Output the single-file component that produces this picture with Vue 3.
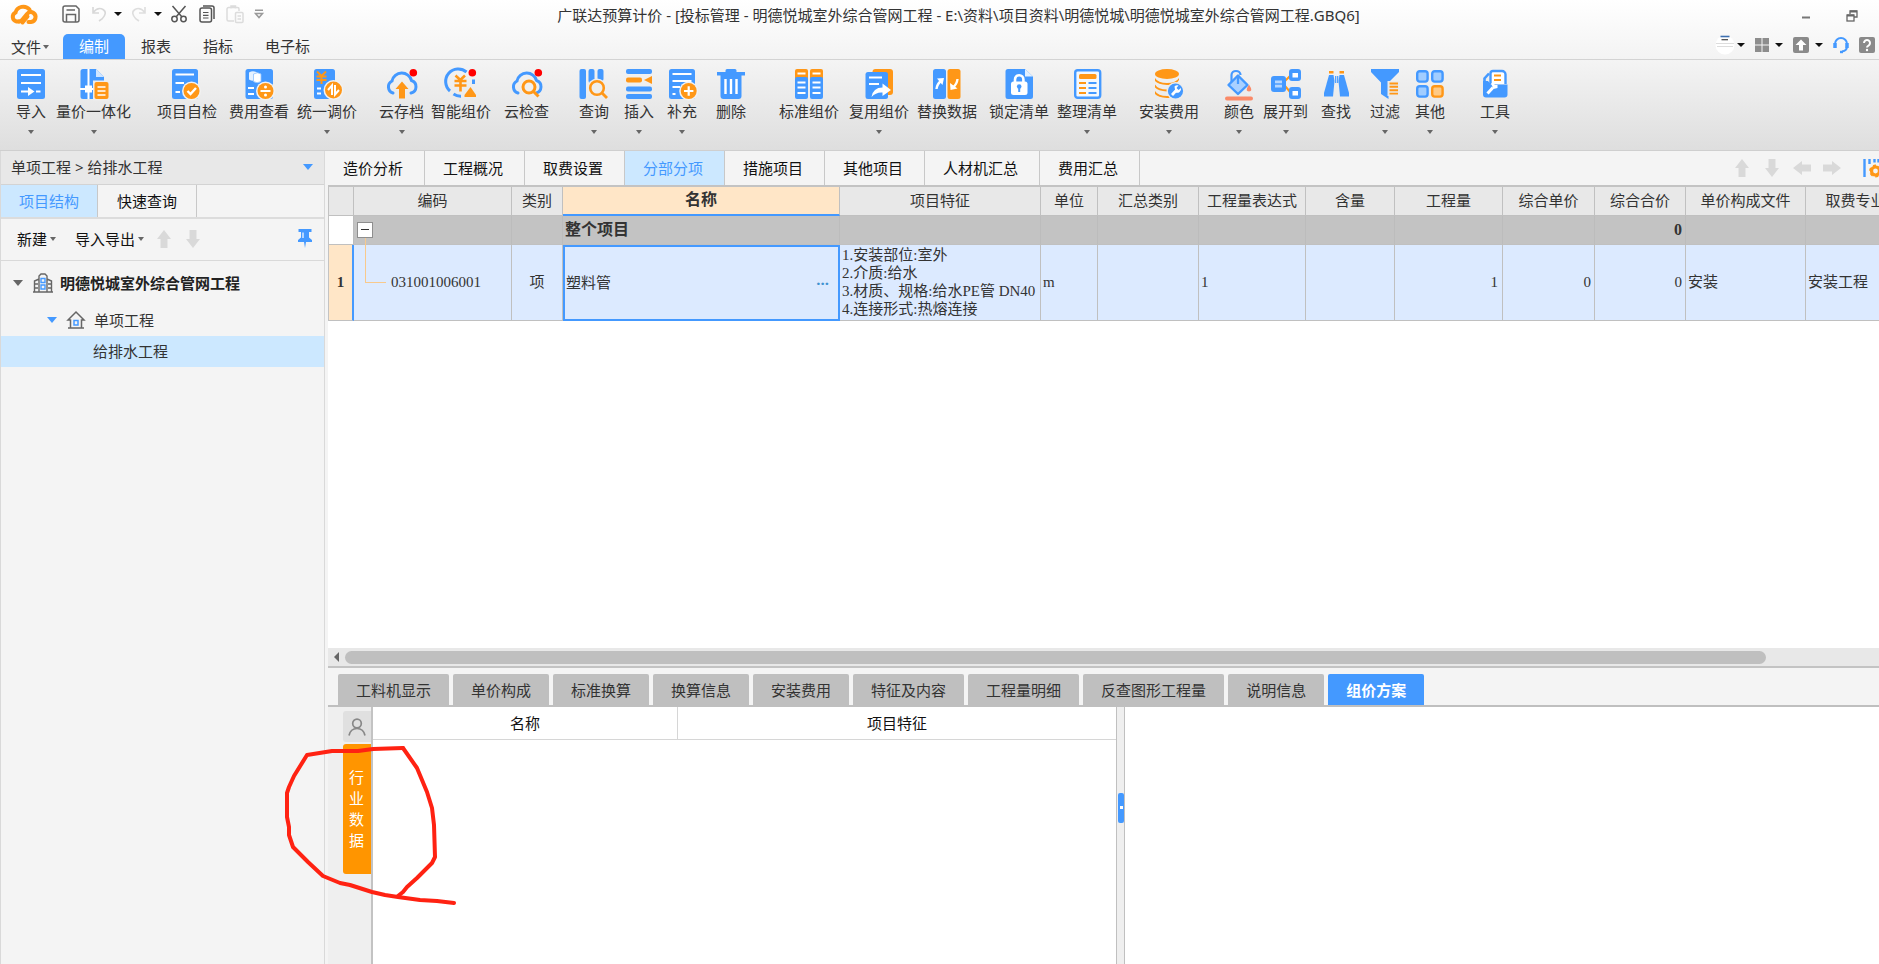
<script setup>
import { ref } from 'vue'

const B = '#4499ff'
const O = '#ff9717'
const line = (d, w = 2, c = '#fff') => `<path d="${d}" fill="none" stroke="${c}" stroke-width="${w}"/>`
const disc = (x, y, r = 8) => `<circle cx="${x}" cy="${y}" r="${r + 1.5}" fill="#f2f2f2"/><circle cx="${x}" cy="${y}" r="${r}" fill="${O}"/>`
const dot = '<circle cx="26.3" cy="3.7" r="3.8" fill="#f00"/>'
const cloud = `<path d="M6 24A6.5 6.5 0 0 1 5 12A10 9.8 0 0 1 24.5 11.5A6.5 6.5 0 0 1 24 24" fill="none" stroke="${B}" stroke-width="3" stroke-linecap="round"/>`
const sheet = (x, w, h = 30, y = 0) => `<rect x="${x}" y="${y}" width="${w}" height="${h}" rx="2.5" fill="${B}"/>`

const icons = {
  import: sheet(1, 28) + line('M5 6H25M5 14H25M5 22.5H13M20 22.5H24.5') + '<path d="M12 18l6.5 4.5L12 27z" fill="#fff"/>',
  unify: `<path d="M4 0H17L25 8V30H4a2.5 2.5 0 0 1-2.500-2.500V2.500A2.500 2.500 0 0 1 4 0z" fill="${B}"/><path d="M17 0l8 8h-8z" fill="#cfe5ff"/>` +
    line('M9.500 0V30M1 20H16') + '<rect x="6" y="16.500" width="7" height="7" fill="#fff"/><rect x="14" y="11.500" width="16.500" height="20" fill="#ededed"/>' +
    `<rect x="15.500" y="13" width="14" height="17" rx="2" fill="${O}"/>` + line('M18.500 18H26.500M18.500 22H26.500M18.500 26H26.500', 1.6),
  check: sheet(0, 26) + line('M3.500 5.500H22M3.500 14H12M3.500 23H8') + disc(19.5, 22) + line('M15.500 22l3 3l5.500-6', 2.4),
  fee: sheet(1.5, 27.5) + '<path d="M5 3.500q4-2.500 8 0v7q-4 2.500-8 0z" fill="#e6f2ff"/><path d="M9.500 5q4-2.500 7.500 0v7.500q-4 2.500-7.500 0z" fill="#fff" stroke="#8fc2ff" stroke-width=".8"/>' +
    line('M4 19H10M4 25H10') + disc(21.5, 22) + line('M16.500 22H26.500') + '<circle cx="21.500" cy="18" r="1.500" fill="#fff"/><circle cx="21.500" cy="26" r="1.500" fill="#fff"/>',
  adjust: sheet(2, 21) + line('M5 2.500L9.500 7L14 2.500M4.500 7.500H14.500M4.500 11H14.500M9.500 6.500V15', 2, O) + line('M5 19.500H9M5 24.500H9') + disc(21.5, 21, 8.5) +
    line('M20 26V16.500L16 21M23 16V25.500L27 21', 2),
  cloudUp: cloud + `<path d="M15 12.500l6.500 7.500H18v9.500h-6V20H8.500z" fill="${O}"/>` + dot,
  smart: `<path d="M20.500 3A12.500 12.500 0 0 0 4 22M27.500 10.500V15M7.500 25A12.500 12.500 0 0 0 15 27.200" fill="none" stroke="${B}" stroke-width="3"/>` +
    line('M9.500 6.500L14.300 11L19 6.500M8.500 12H20.500M8.500 16.500H20.500M14.500 11V22.500', 2.6, O) + `<path d="M24.500 18l5.500 8v2H18.500v-2z" fill="${O}"/>` + dot,
  cloudFind: cloud + '<circle cx="17" cy="18" r="8.500" fill="#f0f0f0"/>' + `<circle cx="17" cy="18" r="6" fill="#f0f0f0" stroke="${O}" stroke-width="3"/>` + line('M21.500 22.500L26.500 27.500', 3, O) + dot,
  query: `<rect x=".5" width="6.500" height="30" rx="2" fill="${B}"/><rect x="9.500" width="6" height="14" rx="2" fill="${B}"/><rect x="18.500" width="6" height="12" rx="2" fill="${B}"/>` +
    `<circle cx="18" cy="19" r="9.500" fill="#eee"/><circle cx="18" cy="19" r="6.800" fill="#eee" stroke="${O}" stroke-width="2.600"/>` + line('M23 24L28 29', 2.8, O),
  insert: `<rect x="2" width="26" height="5" rx="2" fill="${B}"/><rect x="2" y="8.500" width="16" height="5" rx="2" fill="${O}"/><path d="M28 7v8l-8-4z" fill="${O}"/><rect x="2" y="17.500" width="26" height="5" rx="2" fill="${B}"/><rect x="2" y="25" width="26" height="5" rx="2" fill="${B}"/>`,
  add: sheet(2, 26) + line('M5.500 5H24.500') + line('M5.500 12H24.500M5.500 18H13M5.500 25H8.500') + disc(21.7, 22) + line('M17 22H26.400M21.700 17.300V26.700', 2.2),
  trash: `<path d="M1 3H9.500V1.500Q9.500 0 11 0H19Q20.500 0 20.500 1.500V3H29V6.500H1z" fill="${B}"/><path d="M4.500 6H25.500V27a3 3 0 0 1-3 3H7.500a3 3 0 0 1-3-3z" fill="${B}"/>` + line('M9.500 10V25M15 10V25M20.500 10V25', 2.4),
  standard: [1, 16].map(x => `<rect x="${x}" width="13" height="11" rx="2" fill="${O}"/><rect x="${x}" y="8" width="13" height="22" rx="2" fill="${B}"/>` + line(`M${x + 2.5} 4.500h8M${x + 2.5} 13.500h8M${x + 2.5} 18.500h8M${x + 2.5} 24h8`, 1.8)).join(''),
  reuse: `<rect x="8.500" width="20.500" height="26" rx="3" fill="${O}"/>` + sheet(1.5, 22.5, 27, 3) + line('M5 8.500H18M5 15H15') +
    '<path d="M7.500 28Q9 18.500 18.500 18.500V14.500L27 21L18.500 27V23.500Q12 23 7.500 28z" fill="#fff"/>',
  replace: sheet(1, 13) + `<rect x="15.500" width="13" height="30" rx="2.500" fill="${O}"/>` + line('M4.500 20Q5 15 9.500 11.500', 2.4) + '<path d="M5 9.500L12 9L10.500 16z" fill="#fff"/>' +
    line('M25.500 10Q25 15 21 18.500', 2.4) + '<path d="M18 14l.5 7l7-1.500z" fill="#fff"/>',
  lock: `<path d="M4 0H21L29 7.500V27.500A2.500 2.500 0 0 1 26.500 30H4A2.500 2.500 0 0 1 1.500 27.500V2.500A2.500 2.500 0 0 1 4 0z" fill="${B}"/><path d="M21 0l8 7.500h-8z" fill="#e2f0ff"/>` +
    line('M11 14V10.500a4.200 4.200 0 0 1 8.400 0V14', 2.6) + `<rect x="7" y="12.500" width="16.500" height="13.500" rx="2.500" fill="#fff"/><circle cx="15.200" cy="17.500" r="2.300" fill="${B}"/>` + line('M15.200 18V23', 2, B),
  arrange: `<rect x="3.200" y="1.200" width="25" height="27.600" rx="2.500" fill="#f4f8fd" stroke="${B}" stroke-width="2.400"/><rect x="7" y="5" width="17.500" height="5" rx="1.500" fill="${O}"/>` +
    line('M7 14H14M7 19H14M7 24H14', 2.2, O) + line('M16.500 14H24.500M16.500 19H24.500M16.500 24H24.500', 2.2, B),
  install: `<ellipse cx="13" cy="5" rx="12" ry="5" fill="${O}"/>` + [0, 6.5, 13].map(y => `<path d="M1 ${y + 9}Q4 ${y + 14} 13 ${y + 14}T25 ${y + 9}V${y + 11}Q22 ${y + 16.500} 13 ${y + 16}T1 ${y + 12}z" fill="${O}"/>`).join('') +
    `<circle cx="21.500" cy="22" r="9" fill="#ececec"/><circle cx="21.500" cy="22" r="7.600" fill="${B}"/>` + line('M18 26L23 20.500', 2.8) + `<path d="M20.500 17.500a4 4 0 0 1 4-1l-2 2.500l2 2l2.500-2a4 4 0 0 1-5.500 4.500z" fill="#fff"/>`,
  color: `<path d="M14 6.500L23.500 16L14 25L4.500 16z" fill="#a9d0ff" stroke="${B}" stroke-width="2.400" stroke-linejoin="round"/><path d="M7.500 13V6a4.500 4 0 0 1 9 0M14 6V15" fill="none" stroke="${B}" stroke-width="2.200"/><path d="M25 15.500q4.500 7 0 7t0-7z" fill="#fa8a68"/><rect x="1" y="27.500" width="28" height="4" rx="2" fill="#fa8a68"/>`,
  expand: line('M14 12L20 6M14 17L20 24', 2, O) + `<rect x="0" y="7" width="15" height="16" rx="3" fill="${B}"/><rect x="4" y="11.500" width="7" height="7" fill="#b5d7ff"/>` + line('M4 15H11', 1.4, B) +
    `<rect x="18" width="12" height="12" rx="3" fill="${B}"/><rect x="21.500" y="4" width="5.500" height="4.500" fill="#fff"/><rect x="18" y="18" width="12" height="12" rx="3" fill="${B}"/><rect x="21.500" y="22" width="5.500" height="4.500" fill="#fff"/>`,
  find: `<path d="M8 6H12.500L13.500 12L12 27.500H3V24z" fill="${B}"/><path d="M18.500 6H23L28 24V27.500H19L17.500 12z" fill="${B}"/>` + line('M14.700 7V14M16.700 7V14', 1.2, B) + line('M8 3.300H12.500M18.500 3.300H23', 2.4, O),
  filter: `<path d="M1 0H29V3L18.500 13.500V30L11 25V13.500L1 3z" fill="${B}"/><rect x="17.500" y="12" width="12" height="15" fill="#eaeaea"/>` + line('M19.500 14.500H28M19.500 17.800H28M19.500 21.200H28M19.500 24.600H28', 1.9, O),
  other: [[1, 1, B, '#a1cdff'], [16, 1, B, '#a1cdff'], [1, 16, B, '#a1cdff'], [16, 16, O, '#ffca85']].map(([x, y, s, f]) => `<rect x="${x + 1.2}" y="${y + 1.2}" width="10.400" height="10.400" rx="2.500" fill="${f}" stroke="${s}" stroke-width="2.400"/>`).join(''),
  tool: `<path d="M4.500 14V9.500L9 4.500" fill="none" stroke="${B}" stroke-width="2.600"/><path d="M10.500 15V4.500a2.500 2.500 0 0 1 2.500-2.500H22a3.500 3.500 0 0 1 3.500 3.500V15" fill="#fff" stroke="${B}" stroke-width="2.400"/>` +
    line('M14 6.500H21M14 11H21', 2.2, O) + `<path d="M3 12H8L11 15.500H27.500V25.500a3 3 0 0 1-3 3H6a3 3 0 0 1-3-3z" fill="${B}"/>` + line('M7.500 24.500L13 18.500', 3) + '<path d="M11 14.500l3.500-1.500v3h3v3l-4 1z" fill="#fff"/>',
}

const ribbon = [
  ['import', '导入', 1], ['unify', '量价一体化', 1], ['check', '项目自检'], ['fee', '费用查看'], ['adjust', '统一调价', 1],
  ['cloudUp', '云存档', 1], ['smart', '智能组价'], ['cloudFind', '云检查'],
  ['query', '查询', 1], ['insert', '插入', 1], ['add', '补充', 1], ['trash', '删除'],
  ['standard', '标准组价'], ['reuse', '复用组价', 1], ['replace', '替换数据'], ['lock', '锁定清单'], ['arrange', '整理清单', 1],
  ['install', '安装费用', 1], ['color', '颜色', 1], ['expand', '展开到', 1], ['find', '查找'], ['filter', '过滤', 1], ['other', '其他', 1],
  ['tool', '工具', 1],
]

const mainTabs = ['造价分析', '工程概况', '取费设置', '分部分项', '措施项目', '其他项目', '人材机汇总', '费用汇总']
const mainTab = ref('分部分项')
const dockTabs = ['工料机显示', '单价构成', '标准换算', '换算信息', '安装费用', '特征及内容', '工程量明细', '反查图形工程量', '说明信息', '组价方案']
const dockTab = ref('组价方案')
const menus = ['编制', '报表', '指标', '电子标']
const menu = ref('编制')
const sideTabs = ['项目结构', '快速查询']
const sideTab = ref('项目结构')

const columns = [
  ['no', ''], ['code', '编码'], ['kind', '类别'], ['name', '名称'], ['feature', '项目特征'], ['unit', '单位'], ['sumkind', '汇总类别'],
  ['expr', '工程量表达式'], ['content', '含量'], ['qty', '工程量'], ['price', '综合单价'], ['total', '综合合价'], ['file', '单价构成文件'], ['major', '取费专业'],
]
const features = ['1.安装部位:室外', '2.介质:给水', '3.材质、规格:给水PE管 DN40', '4.连接形式:热熔连接']
</script>

<template>
  <div class="app">
    <header class="top">
      <div class="titlebar">
        <div class="quick">
          <svg class="logo" viewBox="0 0 28 21" width="28" height="21">
            <path d="M12.500 18.500L17.500 12.500M9 17.500H6.500A4.800 4.800 0 0 1 5.500 8.500A8 7.500 0 0 1 19.500 5.500" fill="none" stroke="#ff9717" stroke-width="4" stroke-linecap="round" />
            <path d="M9 17.500Q11 17.500 12.500 15.500L17 10Q20 6.500 23.500 9A5 5 0 0 1 21 18H18.500" fill="none" stroke="#ff9717" stroke-width="4" stroke-linecap="round" />
          </svg>
          <button class="q" aria-label="保存"><svg viewBox="0 0 18 18" width="18" height="18" fill="none" stroke="#666" stroke-width="1.500"><path d="M3 1H14L17 4V15a2 2 0 0 1-2 2H3a2 2 0 0 1-2-2V3A2 2 0 0 1 3 1zM4.500 5H13M4.500 17V9.500H13.500V17" /></svg></button>
          <button class="q" aria-label="撤销"><svg viewBox="0 0 18 18" width="18" height="18" fill="none" stroke="#d8d8d8" stroke-width="1.600"><path d="M3 2V8H9M3 7.500Q8 1.500 13 4.500T12 14L9 16" /></svg></button>
          <i class="tri black"></i>
          <button class="q" aria-label="恢复"><svg viewBox="0 0 18 18" width="18" height="18" fill="none" stroke="#dedede" stroke-width="1.600"><path d="M15 2V8H9M15 7.500Q10 1.500 5 4.500T6 14L9 16" /></svg></button>
          <i class="tri black"></i>
          <button class="q" aria-label="剪切"><svg viewBox="0 0 18 18" width="18" height="18" fill="none" stroke="#555" stroke-width="1.500"><path d="M2.500 1L12 12M15.500 1L6 12" /><circle cx="4.500" cy="14" r="2.700" /><circle cx="13.500" cy="14" r="2.700" /></svg></button>
          <button class="q" aria-label="复制"><svg viewBox="0 0 18 18" width="18" height="18" fill="none" stroke="#555" stroke-width="1.500"><path d="M5 1H14a2 2 0 0 1 2 2V14" /><rect x="2" y="3" width="11.500" height="14" rx="2" /><path d="M5 7.500H10.500M5 10.300H10.500M5 13H10.500" stroke-width="1.200" /></svg></button>
          <button class="q" aria-label="粘贴"><svg viewBox="0 0 18 18" width="18" height="18" fill="none" stroke="#dcdcdc" stroke-width="1.500"><path d="M8 16H2.500A1.500 1.500 0 0 1 1 14.500V4A1.500 1.500 0 0 1 2.500 2.500H11.500A1.500 1.500 0 0 1 13 4V6M5 3.500V1H9.500V3.500" /><rect x="9.500" y="7.500" width="7.500" height="10" rx="1" /><path d="M11.500 11H15M11.500 14H15" /></svg></button>
          <button class="q" aria-label="自定义快速访问"><svg viewBox="0 0 10 10" width="10" height="10" fill="none" stroke="#999" stroke-width="1.500"><path d="M1 1.200H9M1.500 4.500H8.500L5 8.500z" /></svg></button>
        </div>
        <h1 class="title">广联达预算计价 - [投标管理 - 明德悦城室外综合管网工程 - E:\资料\项目资料\明德悦城\明德悦城室外综合管网工程.GBQ6]</h1>
        <div class="win">
          <button aria-label="最小化"><svg viewBox="0 0 12 12" width="12" height="12"><path d="M2 7.500H10" stroke="#777" stroke-width="2" /></svg></button>
          <button aria-label="还原"><svg viewBox="0 0 12 12" width="12" height="12" fill="none" stroke="#666" stroke-width="1.300"><path d="M4 4V1H11V7H8" /><rect x="1" y="5" width="7" height="6" /><path d="M4 1.500H11M1 5.500H8" stroke-width="2" /></svg></button>
        </div>
      </div>
      <nav class="menubar">
        <button class="file">文件<i class="tri small"></i></button>
        <button v-for="m in menus" :key="m" class="menu" :class="{ on: m === menu }" @click="menu = m">{{ m }}</button>
        <div class="tools">
          <button class="user" aria-label="账号"><svg viewBox="0 0 20 20" width="20" height="20"><circle cx="10" cy="10" r="9.500" fill="#fff" /><path d="M5.500 1.500H14.500" stroke="#3d6fb0" stroke-width="1.600" /><path d="M6.500 4.700H13" stroke="#444" stroke-width="1.200" /><path d="M1 8.500H19M2 11.500H18" stroke="#ddd" stroke-width="1" /></svg></button><i class="tri black"></i>
          <button aria-label="布局"><svg viewBox="0 0 14 14" width="14" height="14" fill="#8d8d8d"><path d="M0 0h6.500v6.500H0zM7.500 0H14v6.500H7.500zM0 7.500h6.500V14H0zM7.500 7.500H14V14H7.500z" /></svg></button><i class="tri black"></i>
          <button aria-label="升级"><svg viewBox="0 0 16 16" width="16" height="16"><rect width="16" height="16" rx="2" fill="#8a8a8a" /><path d="M8 2.500L13.500 8H10V13.500H6V8H2.500z" fill="#fff" /></svg></button><i class="tri black"></i>
          <button aria-label="客服"><svg viewBox="0 0 16 16" width="16" height="16" fill="none" stroke="#4499ff"><path d="M2 8V7a6 6 0 0 1 12 0V9Q14 14 9 14.500" stroke-width="2" /><path d="M2 6V11M14 6V11" stroke-width="3.500" /><path d="M7 15H10" stroke-width="2.400" /></svg></button>
          <button aria-label="帮助"><svg viewBox="0 0 16 16" width="16" height="16"><rect width="16" height="16" rx="2" fill="#8a8a8a" /><path d="M5 6a3 3 0 1 1 4.500 2.600Q8 9.300 8 10.500" fill="none" stroke="#fff" stroke-width="2" /><circle cx="8" cy="13" r="1.200" fill="#fff" /></svg></button>
        </div>
      </nav>
    </header>

    <section class="ribbon">
      <button v-for="[icon, label, drop] in ribbon" :key="icon" class="cmd">
        <svg viewBox="0 0 30 30" width="30" height="30" v-html="icons[icon]"></svg>
        <span>{{ label }}</span>
        <i v-if="drop" class="tri small"></i>
      </button>
    </section>

    <div class="body">
      <aside class="side">
        <button class="crumb"><span>单项工程 &gt; 给排水工程</span><i class="tri blue"></i></button>
        <div class="sidetabs">
          <button v-for="t in sideTabs" :key="t" :class="{ on: t === sideTab }" @click="sideTab = t">{{ t }}</button>
        </div>
        <div class="sidebar-tools">
          <button>新建<i class="tri small"></i></button>
          <button>导入导出<i class="tri small"></i></button>
          <button aria-label="上移"><svg class="arrow" viewBox="0 0 18 18"><path d="M9 0L16 9H12.500V18H5.500V9H2z" /></svg></button>
          <button aria-label="下移"><svg class="arrow down" viewBox="0 0 18 18"><path d="M9 0L16 9H12.500V18H5.500V9H2z" /></svg></button>
          <button class="pin" aria-label="固定"><svg viewBox="0 0 16 19" width="16" height="19"><path d="M1.500 0H14.500V3H12V8.500L15 11V13H9L8 19L7 13H1V11L4 8.500V3H1.500z" fill="#4499ff" /><path d="M6 3.500V9" stroke="#fff" stroke-width="1.200" /></svg></button>
        </div>
        <ul class="tree">
          <li class="root">
            <i class="tri gray"></i>
            <svg viewBox="0 0 20 20" width="20" height="20" fill="none" stroke="#666" stroke-width="1.400"><path d="M0 19H20M6 19V3L8 1H12L14 3V19M1.500 19V8L6 6M18.500 19V8L14 6M1.500 11H5M1.500 15H5M15 11H18.500M15 15H18.500" /><path d="M8 5.500H12V9.500H8zM8 12H12V16H8z" stroke="#4499ff" /></svg>
            <b>明德悦城室外综合管网工程</b>
          </li>
          <li class="child">
            <i class="tri blue"></i>
            <svg viewBox="0 0 18 18" width="18" height="18" fill="none" stroke="#666" stroke-width="1.500"><path d="M1 9L9 1L17 9H14.500V17H3.500V9zM1 17H17" /><path d="M7 9.500H11V14H7z" stroke="#4499ff" /></svg>
            <span>单项工程</span>
          </li>
          <li class="leaf">给排水工程</li>
        </ul>
      </aside>

      <main class="main">
        <div class="maintabs">
          <button v-for="t in mainTabs" :key="t" :class="{ on: t === mainTab }" @click="mainTab = t">{{ t }}</button>
          <div class="nav">
            <button aria-label="上移"><svg class="arrow" viewBox="0 0 18 18"><path d="M9 0L16 9H12.500V18H5.500V9H2z" /></svg></button>
            <button aria-label="下移"><svg class="arrow down" viewBox="0 0 18 18"><path d="M9 0L16 9H12.500V18H5.500V9H2z" /></svg></button>
            <button aria-label="升级"><svg class="arrow left" viewBox="0 0 18 18"><path d="M9 0L16 9H12.500V18H5.500V9H2z" /></svg></button>
            <button aria-label="降级"><svg class="arrow right" viewBox="0 0 18 18"><path d="M9 0L16 9H12.500V18H5.500V9H2z" /></svg></button>
            <button class="gear" aria-label="列设置"><svg viewBox="0 0 16 20" width="16" height="20"><path d="M1.500 1V19M6.500 1V6M11.500 1V4.500M15.500 1V4.500" stroke="#4499ff" stroke-width="2.400" /><circle cx="12.500" cy="13" r="4" fill="none" stroke="#ff9717" stroke-width="3.200" /><circle cx="12.500" cy="13" r="5.600" fill="none" stroke="#ff9717" stroke-width="1.600" stroke-dasharray="3 2.800" /></svg></button>
          </div>
        </div>

        <div class="sheet">
          <table class="grid">
            <colgroup><col v-for="c in columns" :key="c[0]" :class="'c-' + c[0]"></colgroup>
            <thead>
              <tr><th v-for="c in columns" :key="c[0]" :class="{ hot: c[0] === 'name' }">{{ c[1] }}</th></tr>
            </thead>
            <tbody>
              <tr class="sum">
                <td class="blank"></td>
                <td class="fold"><button aria-label="折叠"></button></td>
                <td></td><td class="strong">整个项目</td>
                <td></td><td></td><td></td><td></td><td></td><td></td><td></td>
                <td class="num strong">0</td><td></td><td></td>
              </tr>
              <tr class="item">
                <td class="rowno">1</td>
                <td class="code">031001006001</td>
                <td class="mid">项</td>
                <td class="sel"><div><span>塑料管</span><button aria-label="更多">···</button></div></td>
                <td class="feat"><p v-for="f in features" :key="f">{{ f }}</p></td>
                <td>m</td><td></td><td>1</td><td></td>
                <td class="num qty">1</td><td class="num">0</td><td class="num">0</td>
                <td>安装</td><td>安装工程</td>
              </tr>
            </tbody>
          </table>
        </div>
        <div class="hscroll"><i></i><div class="thumb"></div></div>

        <section class="dock">
          <div class="docktabs">
            <button v-for="t in dockTabs" :key="t" :class="{ on: t === dockTab }" @click="dockTab = t">{{ t }}</button>
          </div>
          <div class="panes">
            <div class="rail">
              <button class="person" aria-label="个人数据"><svg viewBox="0 0 18 18" width="18" height="18" fill="none" stroke="#888" stroke-width="1.700"><circle cx="9" cy="5.500" r="4.300" /><path d="M1 17.500Q2.500 10.500 9 10.500T17 17.500" /></svg></button>
              <button class="industry">行业数据</button>
            </div>
            <div class="list">
              <table><thead><tr><th class="n">名称</th><th>项目特征</th></tr></thead></table>
            </div>
            <div class="split"><button aria-label="展开面板"></button></div>
            <div class="detail"></div>
          </div>
          <svg class="mark" viewBox="280 740 180 170" width="180" height="170" fill="none" stroke="#ff2212" stroke-width="4" stroke-linejoin="round" stroke-linecap="round">
            <path d="M403 748L373 749L358 751L332 751L307 755L294 776L289 787L287 793V817L289 827V835L293 847L308 862L323 876L340 883L350 885L372 892L385 895L398 897L420 900L437 901L454 903" />
            <path d="M403 748L417 768L427 792L432 808L434 825L435 857L432 863L417 878L407 887L403 892L398 896" />
          </svg>
        </section>
      </main>
    </div>
  </div>
</template>

<style>
body { margin: 0; }
</style>

<style scoped>
* { box-sizing: border-box; }
.app {
  display: flex; flex-direction: column; height: 100vh; overflow: hidden;
  font: 15px/20px "Noto Sans", "Noto Sans CJK SC", sans-serif; color: #333; background: #f4f4f4;
}
button { font: inherit; color: inherit; background: none; border: 0; padding: 0; margin: 0; white-space: nowrap; }
svg { display: block; overflow: visible; flex: none; }
.tri { flex: none; width: 0; height: 0; border: 4px solid transparent; border-top: 5px solid #666; border-bottom: 0; }
.tri.black { border-top: 4px solid #111; }
.tri.small { border-width: 4px 3px 0; }
.tri.blue { border-width: 6px 5px 0; border-top-color: #4499ff; }
.tri.gray { border-width: 6px 5px 0; }

.top { background: linear-gradient(#fff, #f3f3f3); border-bottom: 1px solid #d3d3d3; }
.titlebar { display: flex; align-items: center; height: 32px; }
.quick { display: flex; align-items: center; gap: 10px; padding-left: 10px; height: 28px; margin-bottom: 4px; }
.quick .q { display: flex; }
.logo { margin-right: 14px; }
.quick .tri { margin: 0 -2px 0 -4px; }
.title { flex: 1; margin: 0; font-size: 15px; font-weight: 400; line-height: 30px; height: 32px; text-align: center; white-space: nowrap; }
.win { display: flex; justify-content: flex-end; gap: 34px; padding-right: 21px; width: 226px; }
.menubar { display: flex; align-items: stretch; height: 27px; padding-left: 11px; }
.menubar > button { padding: 0 16px 1px; height: 25px; margin-top: 2px; }
.menubar .file { display: flex; align-items: center; gap: 2px; padding: 0 14px 0 0; }
.menubar .menu.on { background: #4499ff; color: #fff; border-radius: 5px 5px 0 0; }
.tools { display: flex; align-items: center; margin-left: auto; gap: 10px; padding: 0 4px 2px 0; }
.tools .tri { margin-left: -4px; }
.tools .user { margin-right: -4px; }

.ribbon {
  display: grid; justify-items: start; align-items: start; height: 91px; flex: none;
  grid-template-columns: 40px 101px 72px 68px 82px 52px 73px 75px 45px 43px 49px 63px 70px 68px 72px 68px 82px 85px 39px 58px 49px 45px 65px auto;
  padding: 9px 0 0 16px; background: linear-gradient(#f4f4f4, #dedede); border-bottom: 1px solid #cfcfcf;
}
.cmd { display: flex; flex-direction: column; align-items: center; }
.cmd span { margin: 2px 0 9px; }

.body { flex: 1; display: flex; min-height: 0; }
.side { flex: none; width: 325px; border: solid #d9d9d9; border-width: 0 1px; background: #f4f4f4; }
.crumb { display: flex; justify-content: space-between; align-items: center; width: 100%; height: 34px; padding: 0 11px 1px 10px; background: #e8e8e8; border-bottom: 1px solid #d3d3d3; }
.sidetabs { display: flex; height: 34px; border-bottom: 2px solid #dcdcdc; }
.sidetabs button { padding: 0 19px; border-right: 1px solid #c8c8c8; color: #111; }
.sidetabs .on { padding: 0 18px; background: #cce8ff; color: #4499ff; }
.sidebar-tools { display: flex; align-items: center; height: 42px; padding: 0 11px 2px 16px; border-bottom: 1px solid #d9d9d9; color: #111; }
.sidebar-tools button { display: flex; align-items: center; gap: 3px; margin-right: 11px; }
.sidebar-tools button:first-child { margin-right: 19px; }
.sidebar-tools .pin { margin: 0 0 0 auto; }
.arrow { width: 18px; height: 18px; fill: #d9d9d9; }
.down { transform: rotate(180deg); }
.left { transform: rotate(-90deg); }
.right { transform: rotate(90deg); }
.tree { list-style: none; margin: 0; padding: 0; }
.tree li { display: flex; align-items: center; height: 31px; padding-bottom: 1px; white-space: nowrap; }
.tree .root { height: 44px; gap: 10px; padding-left: 12px; color: #222; }
.tree .root svg { margin-right: -3px; }
.tree .child { gap: 9px; padding-left: 46px; }
.tree .child svg { margin-left: 1px; }
.tree .leaf { padding-left: 92px; background: #cce8ff; }

.main { flex: 1; min-width: 0; display: flex; flex-direction: column; padding-left: 3px; }
.maintabs { display: flex; height: 34px; flex: none; margin-left: -3px; }
.maintabs > button { padding: 0 21px 0 18px; border-right: 1px solid #c8c8c8; color: #111; }
.maintabs .on { background: #cce8ff; color: #4499ff; padding-bottom: 1px; }
.nav { display: flex; align-items: center; gap: 12px; margin-left: auto; }
.nav .gear { margin-left: 10px; }
.sheet { flex: 1; overflow: hidden; background: #fff; min-height: 0; }
.grid { border-collapse: separate; border-spacing: 0; table-layout: fixed; width: 1577px; border: solid #c3c3c3; border-width: 2px 0 0 1px; font: 15px/18px "Liberation Serif", "Noto Sans CJK SC", serif; color: #333; }
.c-no { width: 25px; } .c-code { width: 158px; } .c-kind { width: 51px; } .c-name { width: 277px; } .c-feature { width: 201px; }
.c-unit { width: 57px; } .c-sumkind { width: 101px; } .c-expr { width: 107px; } .c-content { width: 89px; } .c-qty { width: 108px; }
.c-price { width: 92px; } .c-total { width: 91px; } .c-file { width: 120px; } .c-major { width: 100px; }
.grid th, .grid td { border: solid #c0c0c0; border-width: 0 1px 1px 0; padding: 0 2px 1px; overflow: hidden; white-space: nowrap; text-align: left; }
.grid th { height: 29px; font-weight: 400; text-align: center; background: #e8e8e8; }
.grid .hot { background: #ffe6c7; font-weight: 700; font-size: 16px; border-bottom: 2px solid #4499ff; }
.grid .sum td { height: 29px; background: #c3c3c3; border-right-color: #bcbcbc; }
.grid .sum .blank { background: #fff; }
.grid .strong { font-weight: 700; font-size: 16px; }
.grid .num { text-align: right; padding-right: 3px; }
.grid .qty { padding-right: 4px; }
.grid .mid { text-align: center; }
.fold button { display: block; width: 16px; height: 16px; margin-left: 1px; background: linear-gradient(#333, #333) center / 8px 1px no-repeat #fff; border: 1px solid #8e8e8e; }
.grid .item td { height: 76px; padding-bottom: 2px; background: #dceaff; }
.grid .item .rowno { background: #ffe6c7; font-weight: 700; text-align: center; border-right: 2px solid #4499ff; }
.grid .item .code { padding-left: 37px; position: relative; overflow: visible; }
.code::before { content: ""; position: absolute; left: 11px; top: -7px; width: 20px; height: 44px; border: solid #f8c98c; border-width: 0 0 1px 1px; }
.grid .item .sel { padding: 0 0 1px; border: 0; box-shadow: inset 0 0 0 2px #4499ff; }
.sel div { display: flex; justify-content: space-between; padding: 0 11px 0 3px; }
.sel button { color: #4192d0; font-weight: 700; font-family: "Noto Sans", sans-serif; }
.feat p { margin: 0; }

.hscroll { flex: none; display: flex; align-items: center; gap: 6px; height: 18px; padding-left: 6px; background: #e8e8e8; }
.hscroll i { border: 5px solid transparent; border-left: 0; border-right-color: #666; }
.thumb { height: 13px; width: 92%; border-radius: 7px; background: #bfbfbf; }

.dock { position: relative; flex: none; height: 298px; display: flex; flex-direction: column; border-top: 2px solid #c3c3c3; }
.docktabs { flex: none; display: flex; gap: 4px; height: 39px; padding: 6px 0 0 10px; border-bottom: 2px solid #bfbfbf; }
.docktabs button { padding: 0 18px; background: #bfbfbf; border-radius: 2px 2px 0 0; }
.docktabs .on { background: #4499ff; color: #fff; font-weight: 700; }
.panes { flex: 1; display: flex; min-height: 0; background: #fff; }
.rail { flex: none; width: 45px; padding: 4px 0 0 15px; background: #efefef; border-right: 2px solid #c3c3c3; }
.person { display: flex; align-items: center; justify-content: center; width: 28px; height: 31px; background: #e0e0e0; border-radius: 3px 0 0 3px; }
.industry { width: 28px; height: 130px; margin-top: 2px; padding: 0 7px 0 6px; background: #ff9500; color: #fff; line-height: 21px; white-space: normal; border-radius: 3px 0 0 3px; }
.list { flex: 1 1 0; min-width: 0; }
.list table { width: 100%; border-collapse: collapse; color: #111; }
.list th { height: 32px; font-weight: 400; border-bottom: 1px solid #d6d6d6; padding: 0; }
.list .n { width: 41%; border-right: 1px solid #d6d6d6; }
.split { flex: none; display: flex; align-items: center; justify-content: flex-end; width: 9px; padding-bottom: 56px; background: #efefef; border: 1px solid #c0c0c0; border-width: 0 1px; }
.split button { width: 6px; height: 30px; border-radius: 2px; background: linear-gradient(#fff, #fff) center / 3px 3px no-repeat #4499ff; }
.detail { flex: 1 1 11px; }
.mark { position: absolute; left: -48px; top: 72px; pointer-events: none; }
</style>
